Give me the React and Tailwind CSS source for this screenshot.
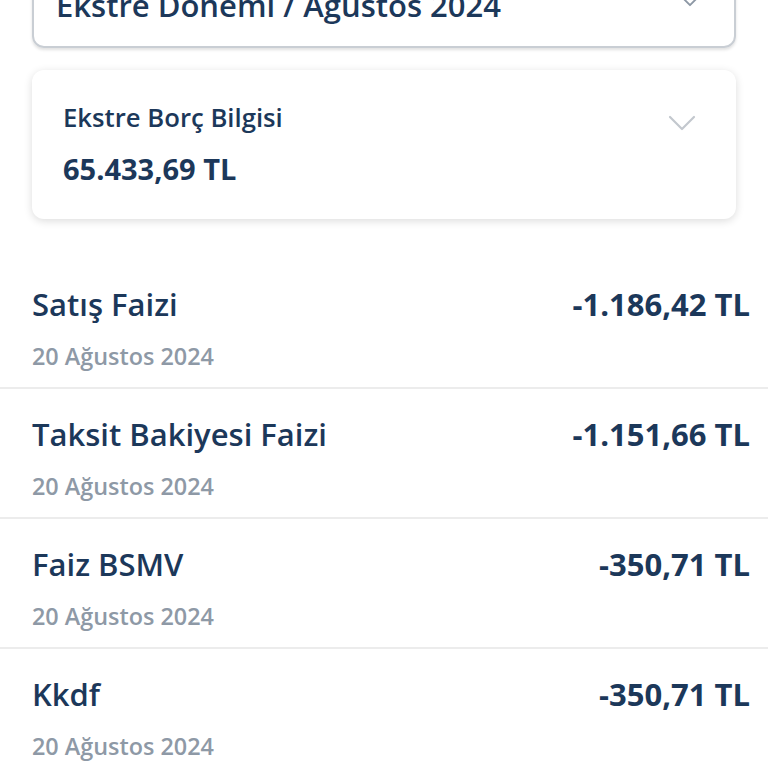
import React from "react";

const rows = [
  { title: "Satış Faizi", date: "20 Ağustos 2024", amount: "-1.186,42 TL" },
  { title: "Taksit Bakiyesi Faizi", date: "20 Ağustos 2024", amount: "-1.151,66 TL" },
  { title: "Faiz BSMV", date: "20 Ağustos 2024", amount: "-350,71 TL" },
  { title: "Kkdf", date: "20 Ağustos 2024", amount: "-350,71 TL" },
];

const Chevron = ({ className }) => (
  <svg viewBox="0 0 28 16" className={className} fill="none" stroke="currentColor" strokeWidth="2.2" strokeLinecap="round" strokeLinejoin="round">
    <path d="M2 2l12 12L26 2" />
  </svg>
);

export default function App() {
  return (
    <div className="w-[768px] h-[768px] overflow-hidden bg-white text-[#1c385a]" style={{ fontFamily: '"Open Sans", "Noto Sans", sans-serif' }}>
      <div className="px-8 -mt-[30px]">
        <div className="h-[78px] border-2 border-[#c9ced4] rounded-xl flex items-center justify-between px-[22px] shadow-[0_2px_3px_rgba(0,0,0,0.12)]">
          <span className="text-[31px] font-semibold leading-none -mt-[8px]">Ekstre Dönemi / Ağustos 2024</span>
          <Chevron className="w-6 h-4 text-[#8d98a5] mr-[10px] -mt-[18px]" />
        </div>
      </div>

      <div className="px-8 mt-[22px]">
        <div className="h-[149px] rounded-xl bg-white shadow-[0_2px_8px_rgba(0,0,0,0.14)] flex justify-between pl-[31px] pr-[40px] pt-[33px]">
          <div className="flex flex-col">
            <span className="text-[25.7px] font-semibold leading-[30px]">Ekstre Borç Bilgisi</span>
            <span className="text-[29px] leading-[34px] font-bold mt-[19px]">65.433,69 TL</span>
          </div>
          <Chevron className="w-7 h-4 text-[#c3c8ce] mt-[12px]" />
        </div>
      </div>

      <div className="mt-[40px]">
        {rows.map((r, i) => (
          <div key={i} className={`h-[130px] pl-8 pr-[18px] pt-[25px] ${i < rows.length - 1 ? "border-b-2 border-[#ececec]" : ""}`}>
            <div className="flex justify-between items-center h-[40px]">
              <span className="text-[31px] font-semibold">{r.title}</span>
              <span className="text-[31px] font-bold">{r.amount}</span>
            </div>
            <div className="text-[23.4px] font-semibold text-[#8e99a6] mt-[17px] leading-[30px]">{r.date}</div>
          </div>
        ))}
      </div>
    </div>
  );
}
